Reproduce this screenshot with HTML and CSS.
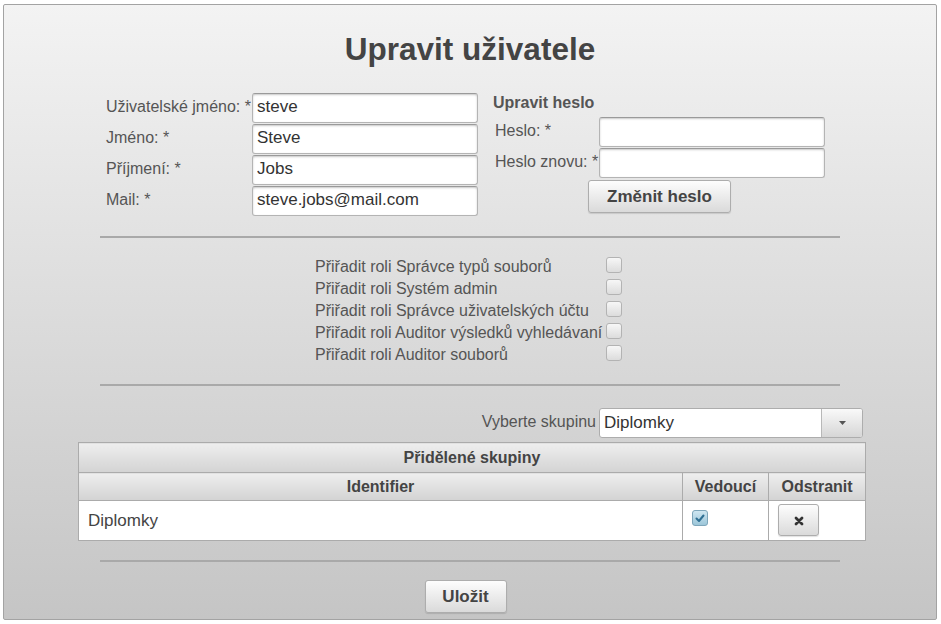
FILE: index.html
```html
<!DOCTYPE html>
<html lang="cs">
<head>
<meta charset="utf-8">
<title>Upravit uživatele</title>
<link rel="stylesheet" href="styles.css">
</head>
<body>
<div class="panel">
  <h1 class="title">Upravit uživatele</h1>

  <div class="form-row">
    <div class="user-form">
      <label class="lbl">Uživatelské jméno: *</label>
      <input class="field" type="text" value="steve">
      <label class="lbl">Jméno: *</label>
      <input class="field" type="text" value="Steve">
      <label class="lbl">Příjmení: *</label>
      <input class="field" type="text" value="Jobs">
      <label class="lbl">Mail: *</label>
      <input class="field" type="text" value="steve.jobs@mail.com">
    </div>
    <div class="pass-form">
      <div class="pass-title">Upravit heslo</div>
      <div class="pass-grid">
        <label class="lbl">Heslo: *</label>
        <input class="field" type="password" value="">
        <label class="lbl">Heslo znovu: *</label>
        <input class="field" type="password" value="">
      </div>
      <button class="btn btn-pass" type="button">Změnit heslo</button>
    </div>
  </div>

  <hr class="sep sep-1">

  <table class="roles">
    <tr><td class="role-lbl">Přiřadit roli Správce typů souborů</td><td class="role-cb"><span class="cb"></span></td></tr>
    <tr><td class="role-lbl">Přiřadit roli Systém admin</td><td class="role-cb"><span class="cb"></span></td></tr>
    <tr><td class="role-lbl">Přiřadit roli Správce uživatelských účtu</td><td class="role-cb"><span class="cb"></span></td></tr>
    <tr><td class="role-lbl">Přiřadit roli Auditor výsledků vyhledávaní</td><td class="role-cb"><span class="cb"></span></td></tr>
    <tr><td class="role-lbl">Přiřadit roli Auditor souborů</td><td class="role-cb"><span class="cb"></span></td></tr>
  </table>

  <hr class="sep sep-2">

  <div class="group-block">
    <div class="select-row">
      <span class="select-lbl">Vyberte skupinu</span>
      <div class="select">
        <span class="select-val">Diplomky</span>
        <span class="select-btn"><svg width="7" height="4" viewBox="0 0 7 4"><path d="M0 0 H7 L3.5 4 Z" fill="#555"/></svg></span>
      </div>
    </div>

    <table class="groups">
      <colgroup>
        <col class="c-id">
        <col class="c-lead">
        <col class="c-del">
      </colgroup>
      <tr class="cap-row"><th colspan="3">Přidělené skupiny</th></tr>
      <tr class="head-row"><th>Identifier</th><th>Vedoucí</th><th>Odstranit</th></tr>
      <tr class="data-row">
        <td class="d-id">Diplomky</td>
        <td class="d-lead"><span class="cb cb-on"><svg width="14" height="14" viewBox="0 0 14 14"><path d="M3.5 7.5 L6 10 L10.5 4.5" fill="none" stroke="#2f6f93" stroke-width="2" stroke-linecap="round" stroke-linejoin="round"/></svg></span></td>
        <td class="d-del"><button class="btn btn-del" type="button"><svg width="10" height="10" viewBox="0 0 10 10"><path d="M2 2 L8 8 M8 2 L2 8" stroke="#333" stroke-width="2.8" stroke-linecap="round"/></svg></button></td>
      </tr>
    </table>
  </div>

  <hr class="sep sep-3">

  <div class="save-row">
    <button class="btn btn-save" type="button">Uložit</button>
  </div>
</div>
</body>
</html>
```

FILE: styles.css
```css
html, body {
  margin: 0;
  padding: 0;
  background: #ffffff;
}

body {
  font-family: "Liberation Sans", Arial, sans-serif;
  color: #555;
}

.panel {
  margin: 4px 4px 0 3px;
  border: 1px solid #a3a3a3;
  border-radius: 2px;
  background: linear-gradient(#f3f3f3, #c5c5c5);
  padding: 26px 0 6px 0;
}

.title {
  margin: 0 0 26px 0;
  font-size: 31.5px;
  line-height: 36px;
  font-weight: bold;
  color: #444;
  text-align: center;
}

.form-row {
  display: flex;
  justify-content: center;
  align-items: flex-start;
  gap: 15px;
  padding-right: 9px;
}

.user-form {
  display: grid;
  grid-template-columns: 144px 226px;
  column-gap: 2px;
  row-gap: 1px;
}

.lbl {
  font-size: 16px;
  line-height: 27px;
  color: #555;
  white-space: nowrap;
}

.field {
  box-sizing: border-box;
  width: 226px;
  height: 30px;
  margin: 0;
  padding: 0 4px 2px 4px;
  border: 1px solid #b4b4b4;
  border-top-color: #9a9a9a;
  border-radius: 3px;
  background: #fff;
  box-shadow: inset 0 1px 2px rgba(0, 0, 0, 0.22);
  font-family: "Liberation Sans", Arial, sans-serif;
  font-size: 17px;
  color: #333;
  outline: none;
}

.pass-form {
  display: flex;
  flex-direction: column;
  width: 332px;
  margin-top: 1px;
}

.pass-title {
  font-size: 16px;
  line-height: 18px;
  font-weight: bold;
  color: #555;
  margin-bottom: 5px;
}

.pass-grid {
  display: grid;
  grid-template-columns: 102px 226px;
  column-gap: 2px;
  row-gap: 1px;
  padding-left: 2px;
}

.btn {
  box-sizing: border-box;
  margin: 0;
  border: 1px solid #adadad;
  border-radius: 3px;
  background: linear-gradient(#fdfdfd, #dadada);
  box-shadow: 0 1px 1px rgba(0, 0, 0, 0.12);
  font-family: "Liberation Sans", Arial, sans-serif;
  font-size: 17px;
  font-weight: bold;
  color: #444;
  padding: 0;
  cursor: pointer;
}

.btn-pass {
  align-self: center;
  width: 143px;
  height: 33px;
  margin-top: 2px;
  margin-left: 1px;
}

.sep {
  width: 740px;
  height: 2px;
  margin-left: auto;
  margin-right: auto;
  border: 0;
  background: #a9a9a9;
  padding: 0;
}

.sep-1 { margin-top: 20px; margin-bottom: 16px; }
.sep-2 { margin-top: 20px; margin-bottom: 22px; }
.sep-3 { margin-top: 19px; margin-bottom: 18px; }

.roles {
  margin: 0 0 0 311px;
  border-collapse: collapse;
  border-spacing: 0;
}

.roles td {
  padding: 0;
  height: 22px;
  vertical-align: middle;
}

.roles td.role-lbl {
  width: 290px;
  padding-top: 4px;
  font-size: 16px;
  line-height: 18px;
  color: #555;
  white-space: nowrap;
  box-sizing: border-box;
}

.roles td.role-cb {
  padding-left: 1px;
}

.cb {
  box-sizing: border-box;
  display: block;
  width: 16px;
  height: 16px;
  border: 1px solid #b3b3b3;
  border-radius: 3px;
  background: linear-gradient(#f7f7f7, #dcdcdc);
}

.cb-on {
  display: flex;
  align-items: center;
  justify-content: center;
  border-color: #7ea6ba;
  background: linear-gradient(#cfe6f1, #9cc6d9);
}

.group-block {
  width: 787px;
  margin-left: 74px;
}

.select-row {
  display: flex;
  justify-content: flex-end;
  align-items: center;
  gap: 3px;
  padding-right: 2px;
  margin-bottom: 4px;
}

.select-lbl {
  font-size: 16px;
  color: #555;
  padding-bottom: 2px;
}

.select {
  box-sizing: border-box;
  display: flex;
  width: 264px;
  height: 30px;
  border: 1px solid #adadad;
  border-radius: 3px;
  background: #fff;
  overflow: hidden;
}

.select-val {
  flex: 1;
  padding: 0 4px 2px 4px;
  font-size: 17px;
  line-height: 28px;
  color: #333;
}

.select-btn {
  width: 40px;
  border-left: 1px solid #b8b8b8;
  background: linear-gradient(#f9f9f9, #d6d6d6);
  display: flex;
  align-items: center;
  justify-content: center;
}

.groups {
  width: 787px;
  border-collapse: collapse;
  table-layout: fixed;
  border: 1px solid #a9a9a9;
}

.c-id { width: 604px; }
.c-lead { width: 86px; }
.c-del { width: 97px; }

.groups th {
  border: 1px solid #ababab;
  background: linear-gradient(#eeeeee, #d3d3d3);
  font-size: 16px;
  font-weight: bold;
  color: #444;
  padding: 0;
  text-align: center;
  vertical-align: middle;
}

.cap-row th { height: 29px; }
.head-row th { height: 27px; }

.groups td {
  border: 1px solid #ababab;
  background: #fff;
  padding: 0;
}

.groups td.d-id {
  height: 39px;
  padding: 0 0 0 9px;
  font-size: 17px;
  color: #444;
  vertical-align: middle;
}

.groups td.d-lead {
  vertical-align: top;
  padding: 9px 0 0 9px;
}

.groups td.d-del {
  vertical-align: top;
  padding: 3px 0 0 9px;
}

.btn-del {
  width: 41px;
  height: 32px;
  display: flex;
  align-items: center;
  justify-content: center;
  padding-top: 2px;
}

.save-row {
  display: flex;
  justify-content: center;
  padding-right: 9px;
}

.btn-save {
  width: 82px;
  height: 33px;
}
```
